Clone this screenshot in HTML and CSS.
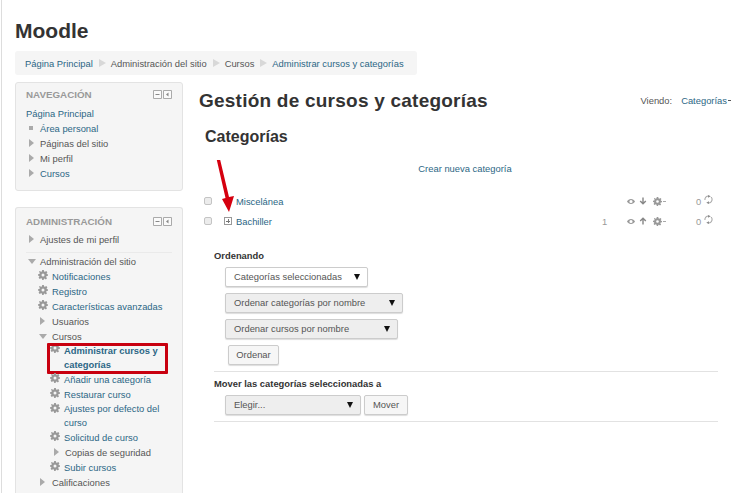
FILE: index.html
```html
<!DOCTYPE html>
<html lang="es">
<head>
<meta charset="utf-8">
<title>Gestión de cursos y categorías</title>
<link rel="stylesheet" href="styles.css">
</head>
<body>
<svg width="0" height="0" class="defs">
  <defs>
    <symbol id="gear" viewBox="0 0 12 12"><path fill="currentColor" fill-rule="evenodd" d="M5 0h2l.3 1.7 1.1.5L9.900 1.200l1.400 1.400-1 1.500.5 1.100L12 5v2l-1.700.3-.5 1.100 1 1.500-1.400 1.400-1.500-1-1.100.5L7 12H5l-.3-1.700-1.100-.5-1.500 1L.7 9.400l1-1.500-.5-1.100L0 7V5l1.700-.3.500-1.100-1-1.500L2.100 1.200l1.500 1 1.100-.5zM6 4.200a1.800 1.800 0 1 0 0 3.600 1.800 1.800 0 0 0 0-3.600z"/></symbol>
    <symbol id="hdr" viewBox="0 0 19 10"><path fill="#fafafa" stroke="#aaa" d="M.5.5h8v8h-8zM10.500.5h8v8h-8z"/><path fill="none" stroke="#888" d="M2.500 4.500h4"/><path fill="#888" d="M15.500 2.500v4l-2.500-2z"/></symbol>
    <symbol id="eye" viewBox="0 0 10 8"><path fill="#999" fill-rule="evenodd" d="M5 .8C2.800.8 1 2.400 0 4c1 1.600 2.800 3.200 5 3.200S9 5.600 10 4C9 2.400 7.200.8 5 .8zM5 2a2 2 0 1 1 0 4 2 2 0 0 1 0-4z"/></symbol>
    <symbol id="down" viewBox="0 0 10 10"><path fill="none" stroke="#888" stroke-width="1.800" d="M5 .5v8M1.500 5L5 8.500 8.500 5"/></symbol>
    <symbol id="up" viewBox="0 0 10 10"><path fill="none" stroke="#888" stroke-width="1.800" d="M5 9.500v-8M1.500 5L5 1.500 8.500 5"/></symbol>
    <symbol id="spin" viewBox="0 0 10 10"><path fill="none" stroke="#aaa" stroke-width="1.200" d="M1 5.500A4 4 0 0 1 5 1.200M9 4.500A4 4 0 0 1 5 8.800"/><path fill="#888" d="M4.500 0l3 1.500-3 1.500zM5.500 7l-3 1.500 3 1.500zM7.500 2l2.500 2H8z"/></symbol>
  </defs>
</svg>
<div class="page">
  <h1 class="site">Moodle</h1>
  <nav class="crumbs">
    <a>Página Principal</a><span class="sep"></span>
    <span>Administración del sitio</span><span class="sep"></span>
    <span>Cursos</span><span class="sep"></span>
    <a>Administrar cursos y categorías</a>
  </nav>
  <div class="columns">
    <aside class="side">
      <section class="block nav-block">
        <header class="block-head"><h2>NAVEGACIÓN</h2><svg class="hdr-icons"><use href="#hdr"/></svg></header>
        <div class="row"><a>Página Principal</a></div>
        <div class="row l1"><i class="dot"></i><a>Área personal</a></div>
        <div class="row l1"><i class="tri"></i><span>Páginas del sitio</span></div>
        <div class="row l1"><i class="tri"></i><span>Mi perfil</span></div>
        <div class="row l1"><i class="tri"></i><a>Cursos</a></div>
      </section>
      <section class="block admin-block">
        <header class="block-head"><h2>ADMINISTRACIÓN</h2><svg class="hdr-icons"><use href="#hdr"/></svg></header>
        <div class="row l1 ruled"><i class="tri"></i><span>Ajustes de mi perfil</span></div>
        <div class="row l1"><i class="tri open"></i><span>Administración del sitio</span></div>
        <div class="row l2"><svg class="gear"><use href="#gear"/></svg><a>Notificaciones</a></div>
        <div class="row l2"><svg class="gear"><use href="#gear"/></svg><a>Registro</a></div>
        <div class="row l2"><svg class="gear"><use href="#gear"/></svg><a>Características avanzadas</a></div>
        <div class="row l2 t"><i class="tri"></i><span>Usuarios</span></div>
        <div class="row l2 t"><i class="tri open"></i><span>Cursos</span></div>
        <div class="row l3 multi current"><svg class="gear"><use href="#gear"/></svg><a>Administrar cursos y categorías</a></div>
        <div class="row l3"><svg class="gear"><use href="#gear"/></svg><a>Añadir una categoría</a></div>
        <div class="row l3"><svg class="gear"><use href="#gear"/></svg><a>Restaurar curso</a></div>
        <div class="row l3 multi"><svg class="gear"><use href="#gear"/></svg><a>Ajustes por defecto del curso</a></div>
        <div class="row l3"><svg class="gear"><use href="#gear"/></svg><a>Solicitud de curso</a></div>
        <div class="row l3 t"><i class="tri"></i><span>Copias de seguridad</span></div>
        <div class="row l3"><svg class="gear"><use href="#gear"/></svg><a>Subir cursos</a></div>
        <div class="row l2 t"><i class="tri"></i><span>Calificaciones</span></div>
      </section>
    </aside>
    <main class="main">
      <div class="title-row">
        <h2 class="title">Gestión de cursos y categorías</h2>
        <div class="viewing"><span>Viendo:</span><a>Categorías<i class="caret"></i></a></div>
      </div>
      <h3 class="sub">Categorías</h3>
      <div class="new-cat"><a>Crear nueva categoría</a></div>
      <div class="cat-list">
        <div class="cat">
          <i class="check"></i><i class="expander"></i><a class="name">Miscelánea</a>
          <span class="count"></span>
          <span class="acts"><svg class="eye"><use href="#eye"/></svg><svg class="arrow"><use href="#down"/></svg><svg class="agear"><use href="#gear"/></svg><i class="mini"></i></span>
          <span class="num">0</span><svg class="spin"><use href="#spin"/></svg>
        </div>
        <div class="cat">
          <i class="check"></i><i class="expander plus"></i><a class="name">Bachiller</a>
          <span class="count">1</span>
          <span class="acts"><svg class="eye"><use href="#eye"/></svg><svg class="arrow"><use href="#up"/></svg><svg class="agear"><use href="#gear"/></svg><i class="mini"></i></span>
          <span class="num">0</span><svg class="spin"><use href="#spin"/></svg>
        </div>
      </div>
      <form class="bulk">
        <h4>Ordenando</h4>
        <div class="sel w1 white">Categorías seleccionadas</div>
        <div class="sel w2">Ordenar categorías por nombre</div>
        <div class="sel w3">Ordenar cursos por nombre</div>
        <div class="btn ordenar">Ordenar</div>
        <hr>
        <h4>Mover las categorías seleccionadas a</h4>
        <div class="move"><div class="sel w4">Elegir...</div><div class="btn">Mover</div></div>
        <hr>
      </form>
    </main>
  </div>
</div>
<svg class="red-arrow" viewBox="0 0 20 54"><path fill="#d5000f" d="M1.800 0h3.400L14 37l5-1-5 16-7-13 3.500-1z"/></svg>
</body>
</html>
```
FILE: styles.css
```css
*, *::before, *::after { box-sizing: border-box; }
html, body { margin: 0; height: 493px; overflow: hidden; background: #fff; }
body { font: 9.4px/15px "Liberation Sans", Arial, sans-serif; color: #555; position: relative; }
a { color: #2c6785; text-decoration: none; }
.defs { position: absolute; }
.page { margin-left: 1px; border-left: 1px solid #ddd; height: 493px; padding: 18px 0 0 13px; }
.site { margin: 0; font-size: 21px; line-height: 26px; font-weight: 700; color: #333; }
.crumbs { display: flex; align-items: center; width: 402px; height: 24px; margin-top: 7px; padding-left: 10px; background: #f5f5f5; border-radius: 3px; white-space: nowrap; }
.sep { width: 0; height: 0; margin: 0 5px 0 6px; border-left: 7px solid #d8d8d8; border-top: 4px solid transparent; border-bottom: 4px solid transparent; }
.columns { display: flex; margin-top: 7px; }
.side { width: 168px; flex: none; }
.block { background: #f5f5f5; border: 1px solid #e3e3e3; border-radius: 3px; padding: 5px 10px; }
.nav-block { height: 109px; padding-top: 4px; }
.nav-block .block-head { margin-bottom: 4px; }
.admin-block { margin-top: 16px; height: 286px; padding-top: 6px; border-bottom: 0; border-radius: 3px 3px 0 0; }
.block-head { display: flex; justify-content: space-between; align-items: center; height: 15px; margin-bottom: 3px; }
.block-head h2 { margin: 0; font-size: 9.800px; font-weight: 700; color: #999; }
.hdr-icons { width: 19px; height: 10px; }
.row { display: flex; align-items: flex-start; min-height: 15px; position: relative; }
.row.l1 { padding-left: 14px; }
.row.l2 { padding-left: 12px; }
.row.l3 { padding-left: 24px; }
.row.l2.t { padding-left: 26px; }
.row.l3.t { padding-left: 39px; }
.tri, .dot { position: absolute; }
.l1 .tri, .l1 .dot { left: 3px; }
.l2 .tri { left: 14px; }
.l3 .tri { left: 28px; }
.tri { top: 3px; width: 0; height: 0; border-left: 5px solid #aaa; border-top: 4px solid transparent; border-bottom: 4px solid transparent; }
.tri.open { top: 5px; border-left: 4px solid transparent; border-right: 4px solid transparent; border-top: 5px solid #aaa; border-bottom: 0; }
.l1 .tri.open { left: 2px; }
.l2 .tri.open { left: 13px; }
.dot { top: 5px; left: 4px; width: 4px; height: 4px; background: #aaa; }
.gear { flex: none; width: 10px; height: 10px; margin: 1px 4px 0 0; color: #999; }
.ruled { padding-bottom: 5px; margin: 1px 0; border-bottom: 1px solid #eaeaea; min-height: 21px; }
.multi a { line-height: 14px; }
.current { font-weight: 700; }
.current .gear { margin-top: -1px; }
.current::before { content: ""; position: absolute; left: 21px; right: 4px; top: -1px; height: 31px; border: 3px solid #c8000f; border-radius: 1px; }
.main { flex: 1; padding: 5px 13px 0 16px; min-width: 0; }
.title-row { display: flex; justify-content: space-between; align-items: center; height: 26px; }
.title { margin: 0; font-size: 19px; font-weight: 700; color: #333; letter-spacing: .23px; }
.viewing { display: flex; gap: 9px; }
.caret { display: inline-block; width: 3px; height: 1px; margin: 0 0 3px 1px; background: #555; }
.sub { margin: 14px 0 0 6px; font-size: 16px; line-height: 20px; font-weight: 700; color: #333; }
.new-cat { margin-top: 14px; text-align: center; height: 15px; }
.cat-list { margin-top: 15px; }
.cat { display: flex; align-items: center; height: 20px; color: #999; }
.check { width: 8px; height: 8px; margin-left: 5px; border: 1px solid #c4c4c4; border-radius: 2px; background: #ececec; }
.expander { width: 8px; height: 8px; margin-left: 12px; position: relative; }
.expander.plus { border: 1px solid #999; }
.expander.plus::after { content: ""; position: absolute; inset: 0; background: linear-gradient(#777,#777) center/4px 1px no-repeat, linear-gradient(#777,#777) center/1px 4px no-repeat; }
.name { margin-left: 4px; width: 366px; }
.count { width: 25px; }
.acts { display: flex; align-items: center; width: 69px; }
.eye { width: 8px; height: 7px; margin-right: 4px; }
.arrow { width: 8px; height: 8px; margin-right: 6px; }
.agear { width: 9px; height: 9px; color: #999; }
.mini { width: 3px; height: 1px; margin-left: 1px; background: #aaa; }
.num { width: 8px; }
.spin { width: 9px; height: 9px; margin-top: -3px; }
.bulk { margin: 17px 0 0 15px; }
.bulk h4 { margin: 0; font-size: 9.400px; font-weight: 700; color: #333; line-height: 15px; }
.sel { position: relative; height: 20px; margin: 6px 0 0 11px; padding-left: 8px; line-height: 18px; border: 1px solid #ccc; border-radius: 2px; background: #eee; box-shadow: 0 1px 1px #ddd; }
.sel.white { background: #fff; margin-top: 4px; }
.sel::after { content: ""; position: absolute; right: 7px; top: 6px; border-left: 3px solid transparent; border-right: 3px solid transparent; border-top: 6px solid #111; }
.w1 { width: 143px; }
.w2 { width: 178px; }
.w3 { width: 173px; }
.w4 { width: 136px; margin: 0; }
.btn { height: 20px; line-height: 18px; text-align: center; border: 1px solid #ccc; border-radius: 2px; background: #f6f6f6; box-shadow: 0 1px 1px #ddd; }
.ordenar { width: 51px; margin: 6px 0 6px 14px; }
.move .btn { width: 44px; }
.bulk hr { height: 1px; margin: 0; border: 0; background: #e2e2e2; width: 504px; }
.bulk hr + h4 { margin-top: 4px; }
.move { display: flex; gap: 3px; margin: 4px 0 6px 11px; }
.red-arrow { position: absolute; left: 215px; top: 160px; width: 20px; height: 54px; }
```
